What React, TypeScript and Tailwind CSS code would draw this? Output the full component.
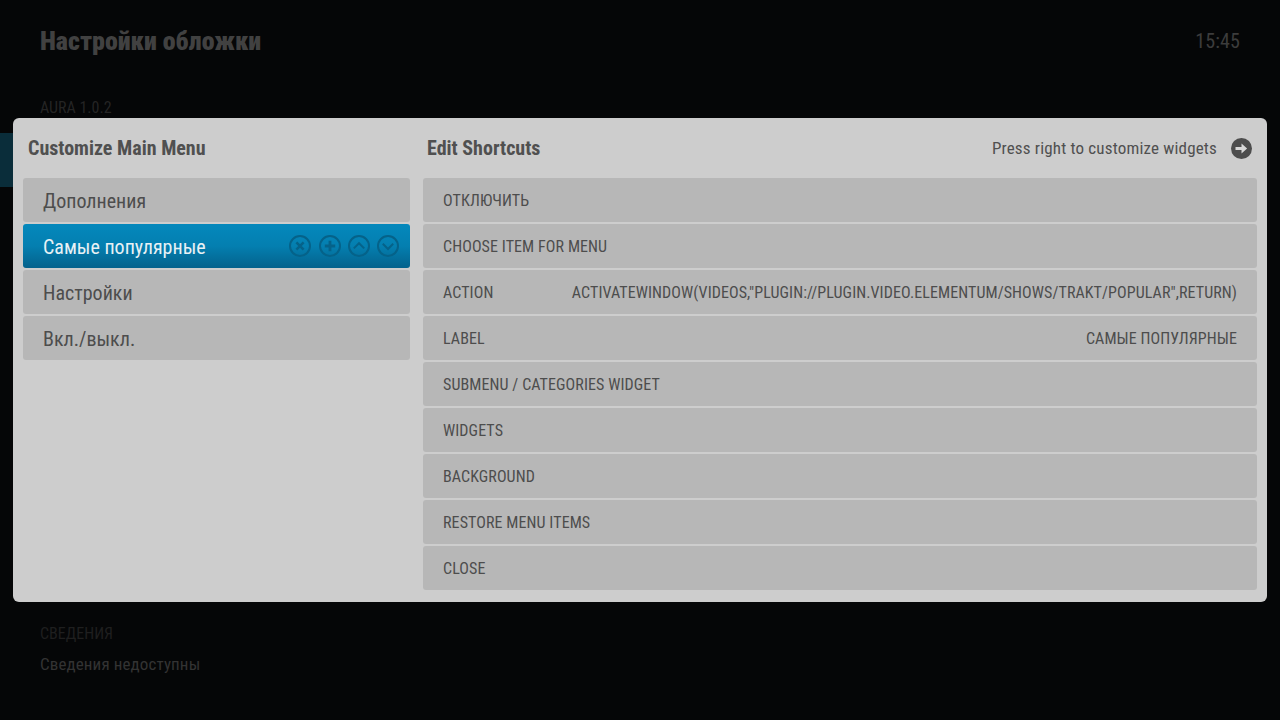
import { Fragment } from 'react';

const FONT = '[font-family:Roboto,"Noto_Sans",sans-serif] [font-stretch:75%]';

const MENU = ['Дополнения', 'Самые популярные', 'Настройки', 'Вкл./выкл.'];

const SHORTCUTS: { label: string; value?: string }[] = [
  { label: 'ОТКЛЮЧИТЬ' },
  { label: 'CHOOSE ITEM FOR MENU' },
  { label: 'ACTION', value: 'ACTIVATEWINDOW(VIDEOS,"PLUGIN://PLUGIN.VIDEO.ELEMENTUM/SHOWS/TRAKT/POPULAR",RETURN)' },
  { label: 'LABEL', value: 'САМЫЕ ПОПУЛЯРНЫЕ' },
  { label: 'SUBMENU / CATEGORIES WIDGET' },
  { label: 'WIDGETS' },
  { label: 'BACKGROUND' },
  { label: 'RESTORE MENU ITEMS' },
  { label: 'CLOSE' },
];

const ICON_PATHS = [
  <path key="x" d="M7.4 7.4l7.2 7.2M14.6 7.4l-7.2 7.2" strokeWidth="2.6" />,
  <path key="plus" d="M11 5.8v10.4M5.8 11h10.4" strokeWidth="2.8" />,
  <path key="up" d="M5.8 13.4l5.2-5.2 5.2 5.2" strokeWidth="2" />,
  <path key="down" d="M5.8 8.8l5.2 5.2 5.2-5.2" strokeWidth="2" />,
];

function RowIcons() {
  return (
    <div className="flex items-center gap-[7px] text-[#056289]">
      {ICON_PATHS.map((p, i) => (
        <svg key={i} width="22" height="22" viewBox="0 0 22 22" fill="none" stroke="currentColor" className={i === 0 ? 'mr-px' : ''}>
          <circle cx="11" cy="11" r="10" strokeWidth="2" />
          {p}
        </svg>
      ))}
    </div>
  );
}

export default function App() {
  return (
    <div className={`relative w-[1280px] h-[720px] overflow-hidden bg-[#050607] ${FONT}`}>
      {/* dimmed settings page behind the dialog */}
      <div className="flex justify-between px-10 pt-[24px]">
        <h1 className="text-[26px] leading-[34px] font-black text-[#414141]">Настройки обложки</h1>
        <span className="text-[20px] leading-[34px] tracking-[0.1px] text-[#3c3c3c]">15:45</span>
      </div>
      <div className="px-10 mt-[40px] text-[16px] leading-5 text-[#242424]">AURA 1.0.2</div>
      <div className="mt-[15px] w-[13px] h-[54px] bg-[#0a2d3a]" />
      <div className="px-10 mt-[437px] text-[16px] leading-5 text-[#1f1f1f]">СВЕДЕНИЯ</div>
      <div className="px-10 mt-[10px] text-[17px] leading-5 tracking-[0.12px] text-[#333333]">Сведения недоступны</div>

      {/* dialog */}
      <div className="absolute left-[13px] top-[118px] w-[1254px] h-[484px] rounded-[6px] bg-[#cdcdcd] flex pl-[10px] pr-[10px] text-[#4d4d4d]">
        <div className="w-[387px] shrink-0">
          <div className="h-[60px] pl-[5px] flex items-center text-[20px] font-bold text-[#505050]">Customize Main Menu</div>
          <div className="flex flex-col gap-[2px]">
            {MENU.map((m, i) =>
              i === 1 ? (
                <div key={m} className="h-[44px] rounded-[3px] bg-gradient-to-b from-[#0488bc] via-[#047fb0] to-[#04628c] pl-5 pr-[11px] flex items-center justify-between text-[20px] text-[#e8f1f5]">
                  <span className="pt-[2px]">{m}</span>
                  <RowIcons />
                </div>
              ) : (
                <div key={m} className="h-[44px] rounded-[3px] bg-[#b7b7b7] pl-5 pt-[2px] flex items-center text-[20px] text-[#4d4d4d]">{m}</div>
              ),
            )}
          </div>
        </div>
        <div className="ml-[13px] flex-1">
          <div className="h-[60px] pl-1 pr-[5px] flex items-center justify-between">
            <span className="text-[20px] font-bold text-[#505050]">Edit Shortcuts</span>
            <div className="flex items-center gap-[14px] text-[17px] tracking-[0.18px] text-[#505050]">
              <span className="pt-[2px]">Press right to customize widgets</span>
              <svg width="21" height="21" viewBox="0 0 21 21">
                <circle cx="10.5" cy="10.5" r="10.5" fill="#4d4d4d" />
                <path d="M4.5 9h6V5.4l5.6 5.1-5.6 5.1V12h-6z" fill="#d8d8d8" />
              </svg>
            </div>
          </div>
          <div className="flex flex-col gap-[2px]">
            {SHORTCUTS.map(s => (
              <Fragment key={s.label}>
                <div className="h-[44px] rounded-[3px] bg-[#b7b7b7] px-5 pt-[2px] flex items-center justify-between text-[16px] tracking-[0.09px] text-[#4d4d4d]">
                  <span>{s.label}</span>
                  {s.value && <span>{s.value}</span>}
                </div>
              </Fragment>
            ))}
          </div>
        </div>
      </div>
    </div>
  );
}
